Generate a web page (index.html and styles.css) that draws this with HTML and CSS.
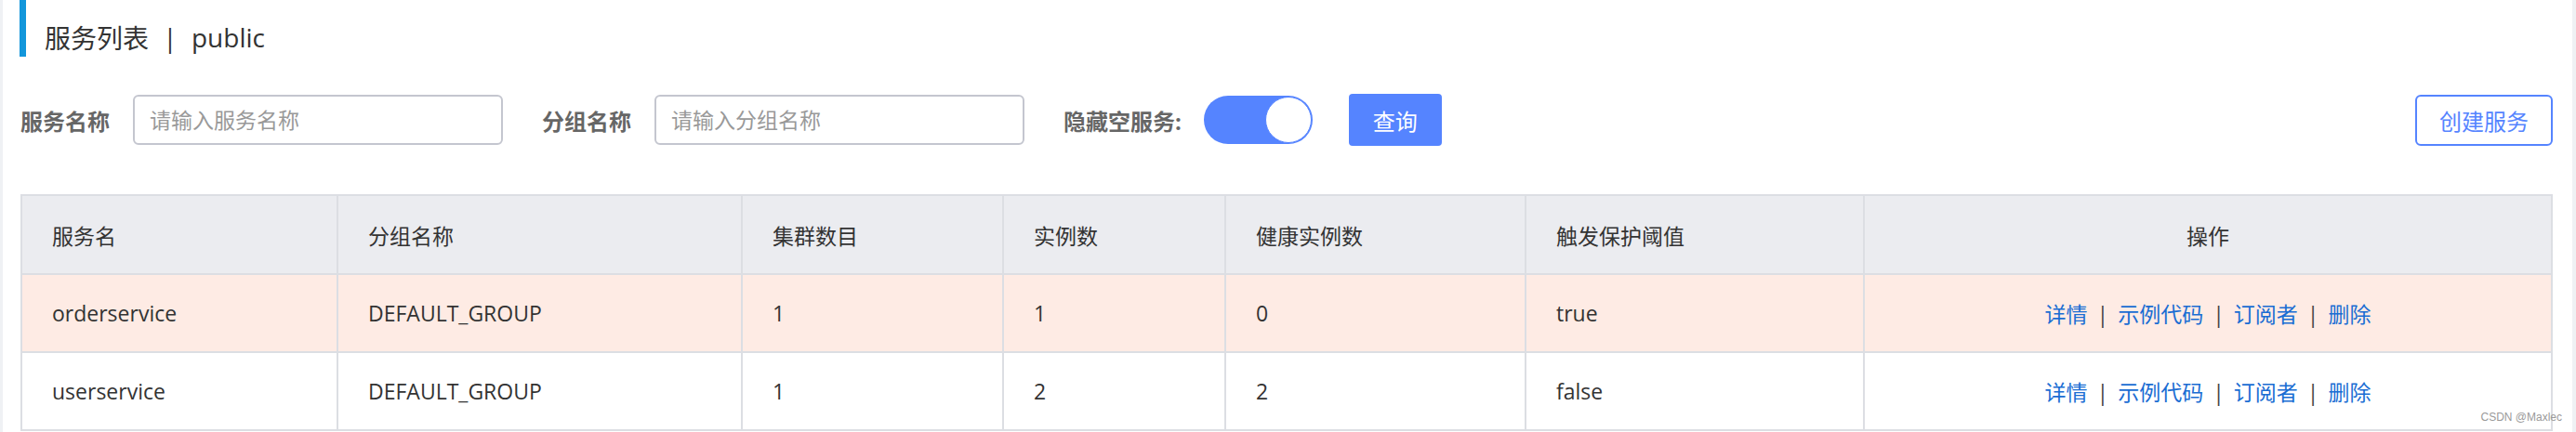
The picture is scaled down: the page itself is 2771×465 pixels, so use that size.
FILE: index.html
```html
<!DOCTYPE html>
<html lang="zh-CN">
<head>
<meta charset="utf-8">
<title>服务列表</title>
<link rel="stylesheet" href="styles.css">
</head>
<body>
<div class="page">
  <div class="title">服务列表 <span class="title-sep">|</span> public</div>

  <div class="search">
    <label class="field-label">服务名称</label>
    <input class="field-input" type="text" placeholder="请输入服务名称">
    <label class="field-label gap-left">分组名称</label>
    <input class="field-input" type="text" placeholder="请输入分组名称">
    <label class="field-label gap-left">隐藏空服务:</label>
    <span class="switch"><span class="switch-knob"></span></span>
    <button class="btn-primary">查询</button>
    <button class="btn-outline">创建服务</button>
  </div>

  <table class="grid">
    <colgroup>
      <col class="c-name">
      <col class="c-group">
      <col class="c-cluster">
      <col class="c-inst">
      <col class="c-healthy">
      <col class="c-protect">
      <col class="c-ops">
    </colgroup>
    <thead>
      <tr>
        <th>服务名</th>
        <th>分组名称</th>
        <th>集群数目</th>
        <th>实例数</th>
        <th>健康实例数</th>
        <th>触发保护阈值</th>
        <th class="center">操作</th>
      </tr>
    </thead>
    <tbody>
      <tr class="warn">
        <td>orderservice</td>
        <td>DEFAULT_GROUP</td>
        <td>1</td>
        <td>1</td>
        <td>0</td>
        <td>true</td>
        <td class="center"><a class="op">详情</a><span class="sep">|</span><a class="op">示例代码</a><span class="sep">|</span><a class="op">订阅者</a><span class="sep">|</span><a class="op">删除</a></td>
      </tr>
      <tr>
        <td>userservice</td>
        <td>DEFAULT_GROUP</td>
        <td>1</td>
        <td>2</td>
        <td>2</td>
        <td>false</td>
        <td class="center"><a class="op">详情</a><span class="sep">|</span><a class="op">示例代码</a><span class="sep">|</span><a class="op">订阅者</a><span class="sep">|</span><a class="op">删除</a></td>
      </tr>
    </tbody>
  </table>
</div>
<div class="watermark">CSDN @Maxlec</div>
</body>
</html>
```

FILE: styles.css
```css
html, body {
  margin: 0;
  padding: 0;
  height: 465px;
  overflow: hidden;
}
body {
  background: #eff1f4;
  font-family: "Open Sans", "Noto Sans CJK SC", sans-serif;
  color: #333;
  position: relative;
}
.page {
  background: #fff;
  margin: 0 4px 0 3px;
  padding: 0 21px 0 19px;
  height: 465px;
  box-sizing: border-box;
}
.title {
  height: 61px;
  box-sizing: border-box;
  padding-top: 18px;
  padding-left: 20px;
  border-left: 7px solid #1296db;
  display: flex;
  align-items: center;
  font-size: 28px;
  color: #333;
  white-space: pre;
  margin-left: -1px;
}
.title-sep {
  margin: 0 8px;
}
.search {
  display: flex;
  align-items: center;
  margin-top: 40px;
  height: 56px;
}
.field-label {
  font-size: 24px;
  font-weight: bold;
  color: #666;
  margin-right: 25px;
  white-space: nowrap;
}
.gap-left {
  margin-left: 42px;
}
.field-input {
  width: 398px;
  height: 54px;
  box-sizing: border-box;
  border: 2px solid #c4c6cf;
  border-radius: 6px;
  padding: 0 16px;
  font-family: "Open Sans", "Noto Sans CJK SC", sans-serif;
  font-size: 23px;
  color: #333;
  outline: none;
}
.field-input::placeholder {
  color: #999;
}
.switch {
  display: flex;
  justify-content: flex-end;
  align-items: center;
  width: 117px;
  height: 52px;
  box-sizing: border-box;
  border-radius: 26px;
  background: #5584ff;
  padding: 1px;
  margin-left: -1px;
}
.switch-knob {
  width: 50px;
  height: 50px;
  box-sizing: border-box;
  border-radius: 50%;
  background: #fff;
  border: 1px solid #5584ff;
}
.btn-primary {
  margin-left: 39px;
  width: 100px;
  height: 56px;
  border: none;
  border-radius: 4px;
  background: #5584ff;
  color: #fff;
  font-family: "Open Sans", "Noto Sans CJK SC", sans-serif;
  font-size: 24px;
  padding: 0;
}
.btn-outline {
  margin-left: auto;
  width: 148px;
  height: 55px;
  box-sizing: border-box;
  border: 2px solid #5584ff;
  border-radius: 6px;
  background: #fff;
  color: #5584ff;
  font-family: "Open Sans", "Noto Sans CJK SC", sans-serif;
  font-size: 24px;
  padding: 0;
}
.grid {
  margin-top: 52px;
  width: 100%;
  border-collapse: collapse;
  table-layout: fixed;
  border: 2px solid #dcdee3;
  font-size: 23px;
}
.c-name { width: 340px; }
.c-group { width: 435px; }
.c-cluster { width: 281px; }
.c-inst { width: 239px; }
.c-healthy { width: 323px; }
.c-protect { width: 364px; }
.grid th,
.grid td {
  border: 2px solid #dcdee3;
  text-align: left;
  padding: 0 0 0 32px;
  font-weight: normal;
  color: #333;
  white-space: nowrap;
}
.grid th {
  height: 83px;
  background: #ebecf0;
}
.grid td {
  height: 82px;
}
.grid .center {
  text-align: center;
  padding-left: 0;
}
.warn td {
  background: #feebe4;
}
.op {
  color: #1a6dd3;
  text-decoration: none;
}
.sep {
  color: #444;
  margin: 0 10px;
}
.watermark {
  position: absolute;
  right: 15px;
  top: 442px;
  font-family: "Liberation Sans", sans-serif;
  font-size: 12px;
  color: #9a9a9a;
}
```
